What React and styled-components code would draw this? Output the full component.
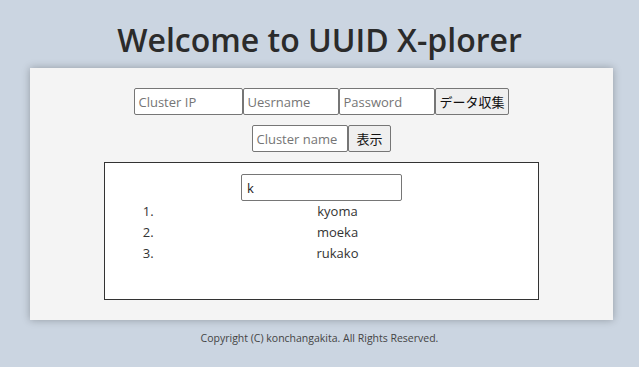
import React from 'react';
import styled, { createGlobalStyle } from 'styled-components';

const GlobalStyle = createGlobalStyle`
  body {
    margin: 0;
    background: #cbd5e1;
    font-family: "Open Sans", "Noto Sans CJK JP", sans-serif;
    color: #333;
  }
`;

const Title = styled.h1`
  margin: 0;
  height: 68px;
  line-height: 80px;
  text-align: center;
  font-size: 32px;
  font-weight: 600;
  color: #2b2b2b;
`;

const Panel = styled.main`
  margin: 0 26px 0 30px;
  padding: 20px 0 20px;
  background: #f4f4f4;
  box-shadow: 0 0 8px rgba(0, 0, 0, 0.28);
  display: flex;
  flex-direction: column;
  align-items: center;
  gap: 10px;
`;

const Row = styled.div`
  display: flex;
`;

const Field = styled.input`
  box-sizing: border-box;
  width: ${p => p.w || 96}px;
  height: 27px;
  margin: 0;
  padding: 0 3px;
  font: 13px "Open Sans", sans-serif;
  border: 1px solid #767676;
  border-radius: 2px;
  background: #fff;
  &::placeholder { color: #757575; }
`;

const Button = styled.button`
  box-sizing: border-box;
  height: 27px;
  margin: 0;
  padding: 0 ${p => p.pad || 3}px;
  font: 13px "Noto Sans CJK JP", sans-serif;
  color: #111;
  background: #efefef;
  border: 1px solid #767676;
  border-radius: 2px;
`;

const ResultBox = styled.section`
  box-sizing: border-box;
  width: 435px;
  padding: 11px 0 35px;
  background: #fff;
  border: 1px solid #333;
  display: flex;
  flex-direction: column;
  align-items: center;
`;

const Search = styled(Field)`
  width: 161px;
  font-size: 13px;
  color: #222;
  padding: 0 5px;
`;

const NameList = styled.ol`
  align-self: stretch;
  margin: 0;
  padding: 0 20px 0 52px;
  font-size: 13px;
  line-height: 21px;
  color: #333;
`;

const NameItem = styled.li`
  text-align: center;
`;

const Footer = styled.footer`
  padding: 11px 0 10px;
  text-align: center;
  font-size: 10.5px;
  color: #444;
`;

const names = ['kyoma', 'moeka', 'rukako'];

export default function App() {
  return (
    <>
      <GlobalStyle />
      <Title>Welcome to UUID X-plorer</Title>
      <Panel>
        <Row>
          <Field w={109} placeholder="Cluster IP" />
          <Field placeholder="Uesrname" />
          <Field type="password" placeholder="Password" />
          <Button>データ収集</Button>
        </Row>
        <Row>
          <Field placeholder="Cluster name" />
          <Button pad={7}>表示</Button>
        </Row>
        <ResultBox>
          <Search defaultValue="k" />
          <NameList>
            {names.map(n => <NameItem key={n}>{n}</NameItem>)}
          </NameList>
        </ResultBox>
      </Panel>
      <Footer>Copyright (C) konchangakita. All Rights Reserved.</Footer>
    </>
  );
}
